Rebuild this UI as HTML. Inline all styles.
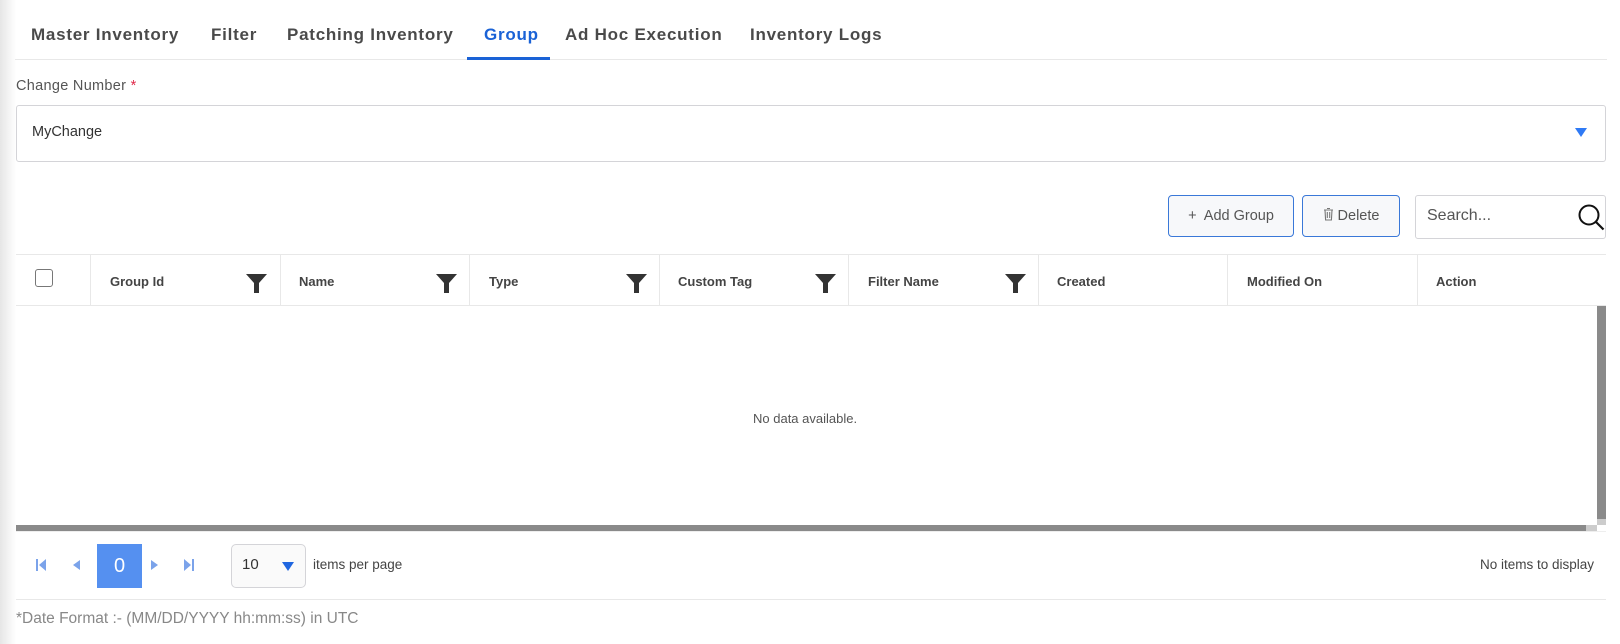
<!DOCTYPE html>
<html><head><meta charset="utf-8"><style>
*{box-sizing:border-box;margin:0;padding:0}
body{width:1620px;height:644px;background:#fff;font-family:"Liberation Sans",sans-serif;position:relative;overflow:hidden;color:#333}
.abs{position:absolute}
.grad{left:0;top:0;width:16px;height:644px;background:linear-gradient(to right,#e6e6e6,#fff)}
.tab{position:absolute;top:25px;font-size:17px;font-weight:bold;color:#4a4a4a;letter-spacing:.75px;white-space:nowrap}
.th{position:absolute;top:274px;font-size:13px;font-weight:bold;color:#444}
.vl{position:absolute;top:254px;height:52px;width:1px;background:#e8e8e8}
.fun{position:absolute;top:273px}
</style></head><body>
<div class="abs grad"></div>
<div class="tab" style="left:31px">Master Inventory</div>
<div class="tab" style="left:211px">Filter</div>
<div class="tab" style="left:287px">Patching Inventory</div>
<div class="tab" style="left:484px;color:#1a62d6">Group</div>
<div class="tab" style="left:565px">Ad Hoc Execution</div>
<div class="tab" style="left:750px">Inventory Logs</div>
<div class="abs" style="left:15px;top:59px;width:1592px;height:1px;background:#e8e8e8"></div>
<div class="abs" style="left:467px;top:57px;width:83px;height:3px;background:#1a62d6"></div>

<div class="abs" style="left:16px;top:78px;font-size:14.5px;color:#555;letter-spacing:.3px">Change Number <span style="color:#e0294a">*</span></div>
<div class="abs" style="left:16px;top:105px;width:1590px;height:57px;border:1px solid #d4d4d8;border-radius:3px"></div>
<div class="abs" style="left:32px;top:124px;font-size:14.5px;color:#333">MyChange</div>
<div class="abs" style="left:1575px;top:128px;width:0;height:0;border-left:6px solid transparent;border-right:6px solid transparent;border-top:9px solid #2f7af5"></div>

<div class="abs" style="left:1168px;top:195px;width:126px;height:42px;border:1px solid #3a78d8;border-radius:4px;background:#f7f8fa;font-size:14.5px;color:#555;text-align:center;line-height:40px">+&nbsp; Add Group</div>
<div class="abs" style="left:1302px;top:195px;width:98px;height:42px;border:1px solid #3a78d8;border-radius:4px;background:#f7f8fa;font-size:14.5px;color:#555;text-align:center;line-height:40px"><svg width="11" height="14" viewBox="0 0 11 14" style="vertical-align:-1px"><path d="M1 3h9M4 1.5h3M2 3l.6 10h5.8L9 3M4.3 5v6M6.7 5v6" stroke="#777" stroke-width="1.1" fill="none"/></svg> Delete</div>
<div class="abs" style="left:1415px;top:195px;width:191px;height:44px;border:1px solid #d4d4d8;border-radius:3px"></div>
<div class="abs" style="left:1427px;top:207px;font-size:16px;color:#555">Search...</div>
<svg class="abs" style="left:1577px;top:203px" width="30" height="30" viewBox="0 0 30 30"><circle cx="12" cy="12" r="9.5" stroke="#111" stroke-width="2" fill="none"/><path d="M18.5 18.5l8 8" stroke="#111" stroke-width="2.2"/></svg>

<div class="abs" style="left:16px;top:254px;width:1590px;height:1px;background:#e8e8e8"></div>
<div class="abs" style="left:16px;top:305px;width:1590px;height:1px;background:#e8e8e8"></div>
<div class="abs" style="left:35px;top:269px;width:18px;height:18px;border:1.5px solid #777;border-radius:3px"></div>
<div class="vl" style="left:90px"></div><div class="vl" style="left:280px"></div><div class="vl" style="left:469px"></div><div class="vl" style="left:659px"></div><div class="vl" style="left:848px"></div><div class="vl" style="left:1038px"></div><div class="vl" style="left:1227px"></div><div class="vl" style="left:1417px"></div>
<div class="th" style="left:110px">Group Id</div>
<div class="th" style="left:299px">Name</div>
<div class="th" style="left:489px">Type</div>
<div class="th" style="left:678px">Custom Tag</div>
<div class="th" style="left:868px">Filter Name</div>
<div class="th" style="left:1057px">Created</div>
<div class="th" style="left:1247px">Modified On</div>
<div class="th" style="left:1436px">Action</div>
<svg class="fun" style="left:246px" width="21" height="21" viewBox="0 0 21 21"><path d="M0 1h21L13 10v10h-5V10z" fill="#333"/></svg>
<svg class="fun" style="left:436px" width="21" height="21" viewBox="0 0 21 21"><path d="M0 1h21L13 10v10h-5V10z" fill="#333"/></svg>
<svg class="fun" style="left:626px" width="21" height="21" viewBox="0 0 21 21"><path d="M0 1h21L13 10v10h-5V10z" fill="#333"/></svg>
<svg class="fun" style="left:815px" width="21" height="21" viewBox="0 0 21 21"><path d="M0 1h21L13 10v10h-5V10z" fill="#333"/></svg>
<svg class="fun" style="left:1005px" width="21" height="21" viewBox="0 0 21 21"><path d="M0 1h21L13 10v10h-5V10z" fill="#333"/></svg>

<div class="abs" style="left:1597px;top:306px;width:9px;height:213px;background:#8a8a8a"></div>
<div class="abs" style="left:1597px;top:519px;width:9px;height:6px;background:#ccc"></div>
<div class="abs" style="left:16px;top:525px;width:1570px;height:6px;background:#8a8a8a"></div>
<div class="abs" style="left:1586px;top:525px;width:11px;height:6px;background:#ccc"></div>
<div class="abs" style="left:16px;top:531px;width:1590px;height:1px;background:#eee"></div>
<div class="abs" style="left:753px;top:411px;font-size:13px;color:#555">No data available.</div>

<svg class="abs" style="left:35px;top:559px" width="12" height="12" viewBox="0 0 12 12"><path d="M1 0h2v12H1zM11 0v12L4 6z" fill="#7ba3ea"/></svg>
<svg class="abs" style="left:71px;top:559px" width="10" height="12" viewBox="0 0 10 12"><path d="M9 1v10L2 6z" fill="#7ba3ea"/></svg>
<div class="abs" style="left:97px;top:544px;width:45px;height:44px;background:#5590f0;color:#fff;font-size:20px;text-align:center;line-height:44px">0</div>
<svg class="abs" style="left:150px;top:559px" width="10" height="12" viewBox="0 0 10 12"><path d="M1 1v10L8 6z" fill="#7ba3ea"/></svg>
<svg class="abs" style="left:183px;top:559px" width="12" height="12" viewBox="0 0 12 12"><path d="M1 0v12L8 6zM9 0h2v12H9z" fill="#7ba3ea"/></svg>
<div class="abs" style="left:231px;top:544px;width:75px;height:44px;border:1px solid #d4d4d8;border-radius:5px;background:#fafafa"></div>
<div class="abs" style="left:242px;top:556px;font-size:15px;color:#333">10</div>
<div class="abs" style="left:282px;top:562px;width:0;height:0;border-left:6px solid transparent;border-right:6px solid transparent;border-top:9px solid #1f66e0"></div>
<div class="abs" style="left:313px;top:557px;font-size:13.5px;color:#444">items per page</div>
<div class="abs" style="left:1400px;top:557px;font-size:13.5px;color:#444;width:194px;text-align:right;white-space:nowrap">No items to display</div>
<div class="abs" style="left:16px;top:599px;width:1590px;height:1px;background:#e8e8e8"></div>
<div class="abs" style="left:16px;top:610px;font-size:15.5px;color:#888">*Date Format :- (MM/DD/YYYY hh:mm:ss) in UTC</div>
</body></html>
